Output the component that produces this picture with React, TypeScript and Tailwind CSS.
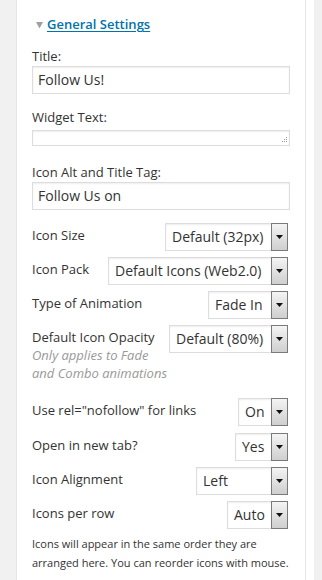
import React from "react";

const font = { fontFamily: '"Open Sans", "Noto Sans", sans-serif' };

function Select({ value, width }: { value: string; width: string }) {
    return (
        <div className={`${width} mr-[2px] h-[28px] flex items-stretch border border-[#dddddd] bg-white shadow-[inset_0_1px_2px_rgba(0,0,0,0.07)]`}>
            <span className="flex-1 pl-[6px] text-[14px] leading-[26px] text-[#333333] whitespace-nowrap overflow-hidden">
                {value}
            </span>
            <span className="w-[17px] -my-px -mr-px flex items-center justify-center border border-[#7a7a7a] bg-gradient-to-b from-[#f4f4f4] to-[#cfcfcf]">
                <svg width="7" height="4" viewBox="0 0 7 4">
                    <path d="M0 0h7L3.5 4z" fill="#111" />
                </svg>
            </span>
        </div>
    );
}

function Row({ label, value, width, className = "" }: { label: string; value: string; width: string; className?: string }) {
    return (
        <div className={`flex justify-between items-start ${className}`}>
            <label className="pt-[3px] text-[13px] leading-[18px] text-[#333333]">{label}</label>
            <Select value={value} width={width} />
        </div>
    );
}

export default function App() {
    return (
        <div className="min-h-[580px] bg-[#f1f1f1] pl-[16px] flex" style={font}>
            <div className="w-[298px] bg-white flex">
                <div className="w-[290px] border-x border-[#e5e5e5] px-[15px] pt-[15px]">

                    {/* Section header */}
                    <div className="flex items-center gap-[4px] h-[20px] pl-[4px]">
                        <svg width="7" height="7" viewBox="0 0 7 7">
                            <path d="M0 0h7L3.5 6.5z" fill="#a0a0a5" />
                        </svg>
                        <a href="#" className="text-[13px] font-semibold text-[#0073aa] underline underline-offset-[2px]">
                            General Settings
                        </a>
                    </div>

                    {/* Text fields */}
                    <div className="mt-[12px]">
                        <label className="block text-[13px] leading-[18px] text-[#333333]">Title:</label>
                        <div className="mt-px h-[28px] border border-[#dddddd] shadow-[inset_0_1px_2px_rgba(0,0,0,0.07)] pl-[5px] text-[14px] leading-[26px] text-[#333333]">
                            Follow Us!
                        </div>
                    </div>

                    <div className="mt-[14px]">
                        <label className="block text-[13px] leading-[18px] text-[#333333]">Widget Text:</label>
                        <div className="mt-[4px] h-[16px] border border-[#dddddd] shadow-[inset_0_1px_2px_rgba(0,0,0,0.07)] flex justify-end items-end pr-[2px] pb-[2px]">
                            <svg width="6" height="6" viewBox="0 0 6 6">
                                <rect x="5" y="0" width="1" height="1" fill="#999" />
                                <rect x="3" y="2" width="1" height="1" fill="#999" />
                                <rect x="5" y="2" width="1" height="1" fill="#999" />
                                <rect x="1" y="4" width="1" height="1" fill="#999" />
                                <rect x="3" y="4" width="1" height="1" fill="#999" />
                                <rect x="5" y="4" width="1" height="1" fill="#999" />
                            </svg>
                        </div>
                    </div>

                    <div className="mt-[17px]">
                        <label className="block text-[13px] leading-[18px] text-[#333333]">Icon Alt and Title Tag:</label>
                        <div className="mt-px h-[28px] border border-[#dddddd] shadow-[inset_0_1px_2px_rgba(0,0,0,0.07)] pl-[5px] text-[14px] leading-[26px] text-[#333333]">
                            Follow Us on
                        </div>
                    </div>

                    {/* Selects */}
                    <div className="mt-[13px] flex flex-col gap-[6px]">
                        <Row label="Icon Size" value="Default (32px)" width="w-[123px]" />
                        <Row label="Icon Pack" value="Default Icons (Web2.0)" width="w-[180px]" />
                        <Row label="Type of Animation" value="Fade In" width="w-[80px]" />
                        <div className="flex justify-between items-start">
                            <div className="pt-[3px] text-[13px] leading-[18px]">
                                <div className="text-[#333333]">Default Icon Opacity</div>
                                <div className="italic text-[#999999]">Only applies to Fade<br />and Combo animations</div>
                            </div>
                            <Select value="Default (80%)" width="w-[119px]" />
                        </div>
                        <Row label={'Use rel="nofollow" for links'} value="On" width="w-[50px]" className="mt-[10px]" />
                        <Row label="Open in new tab?" value="Yes" width="w-[53px]" className="mt-px" />
                        <Row label="Icon Alignment" value="Left" width="w-[92px]" />
                        <Row label="Icons per row" value="Auto" width="w-[61px]" />
                    </div>

                    <p className="mt-[5px] text-[11px] leading-[19px] text-[#333333]">
                        Icons will appear in the same order they are arranged here. You can reorder icons with mouse.
                    </p>
                </div>
            </div>
        </div>
    );
}
